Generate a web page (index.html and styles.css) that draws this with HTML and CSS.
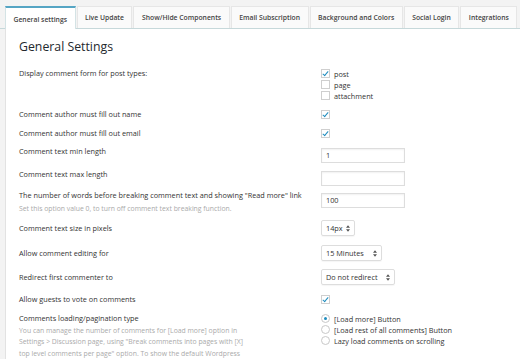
FILE: index.html
```html
<!DOCTYPE html>
<html lang="en">
<head>
    <meta charset="UTF-8">
    <title>General Settings</title>
    <link rel="stylesheet" href="styles.css">
</head>
<body>
    <ul class="tabs">
        <li class="tab active">General settings</li>
        <li class="tab">Live Update</li>
        <li class="tab">Show/Hide Components</li>
        <li class="tab">Email Subscription</li>
        <li class="tab">Background and Colors</li>
        <li class="tab">Social Login</li>
        <li class="tab">Integrations</li>
    </ul>

    <section class="panel">
        <h2 class="title">General Settings</h2>

        <div class="row row-types">
            <div class="label">Display comment form for post types:</div>
            <div class="field">
                <div class="opt"><span class="check on"></span>post</div>
                <div class="opt"><span class="check"></span>page</div>
                <div class="opt"><span class="check"></span>attachment</div>
            </div>
        </div>

        <div class="row row-name">
            <div class="label">Comment author must fill out name</div>
            <div class="field"><div class="opt"><span class="check on"></span></div></div>
        </div>

        <div class="row row-email">
            <div class="label">Comment author must fill out email</div>
            <div class="field"><div class="opt"><span class="check on"></span></div></div>
        </div>

        <div class="row row-min">
            <div class="label">Comment text min length</div>
            <div class="field"><div class="input">1</div></div>
        </div>

        <div class="row row-max">
            <div class="label">Comment text max length</div>
            <div class="field"><div class="input"></div></div>
        </div>

        <div class="row row-words">
            <div class="label">The number of words before breaking comment text and showing "Read more" link
                <p class="desc">Set this option value 0, to turn off comment text breaking function.</p>
            </div>
            <div class="field"><div class="input words">100</div></div>
        </div>

        <div class="row row-select row-size">
            <div class="label">Comment text size in pixels</div>
            <div class="field">
                <div class="select s-size">14px
                    <svg class="arrows" width="4" height="7" viewBox="0 0 4 7"><path d="M0 2.8L2 0.3L4 2.8Z M0 4.2L2 6.7L4 4.2Z" fill="#555"/></svg>
                </div>
            </div>
        </div>

        <div class="row row-select row-edit">
            <div class="label">Allow comment editing for</div>
            <div class="field">
                <div class="select s-edit">15 Minutes
                    <svg class="arrows" width="4" height="7" viewBox="0 0 4 7"><path d="M0 2.8L2 0.3L4 2.8Z M0 4.2L2 6.7L4 4.2Z" fill="#555"/></svg>
                </div>
            </div>
        </div>

        <div class="row row-select row-redirect">
            <div class="label">Redirect first commenter to</div>
            <div class="field">
                <div class="select s-redirect">Do not redirect
                    <svg class="arrows" width="4" height="7" viewBox="0 0 4 7"><path d="M0 2.8L2 0.3L4 2.8Z M0 4.2L2 6.7L4 4.2Z" fill="#555"/></svg>
                </div>
            </div>
        </div>

        <div class="row row-vote">
            <div class="label">Allow guests to vote on comments</div>
            <div class="field"><div class="opt"><span class="check on"></span></div></div>
        </div>

        <div class="row row-load">
            <div class="label">Comments loading/pagination type
                <p class="desc">You can manage the number of comments for [Load more] option in Settings &gt; Discussion page, using "Break comments into pages with [X] top level comments per page" option. To show the default Wordpress comment pagination you should enable the checkbox on bigining of the page.</p>
            </div>
            <div class="field">
                <div class="opt"><span class="radio on"></span>[Load more] Button</div>
                <div class="opt"><span class="radio"></span>[Load rest of all comments] Button</div>
                <div class="opt"><span class="radio"></span>Lazy load comments on scrolling</div>
            </div>
        </div>
    </section>
</body>
</html>
```

FILE: styles.css
```css
* {
    margin: 0;
    padding: 0;
    box-sizing: border-box;
}

body {
    font-family: 'Open Sans', sans-serif;
    background-color: #f3f3f3;
    color: #333;
    font-size: 7.3px;
    height: 359px;
    overflow: hidden;
}

.tabs {
    list-style: none;
    display: flex;
    gap: 1px;
    padding: 6px 0 0 5px;
    border-bottom: 1px solid #c6d8da;
}

.tab {
    height: 22px;
    padding: 0 7.5px;
    display: flex;
    align-items: center;
    background-color: #fafafa;
    border: 1px solid #e6e6e6;
    border-bottom: none;
    font-size: 6.8px;
    font-weight: 600;
    color: #444;
    white-space: nowrap;
}

.tab.active {
    background-color: #fff;
    border-top: 2px solid #55a5c4;
    border-left-color: #d4e3e5;
    border-right-color: #d4e3e5;
    margin-bottom: -1px;
    height: 23px;
    padding-top: 1px;
}

.panel {
    margin-left: 5px;
    background-color: #fff;
    border-left: 1px solid #e2e2e2;
    padding: 8px 0 0 13px;
    height: 400px;
}

.title {
    font-size: 12.3px;
    line-height: 20px;
    font-weight: 400;
    color: #23282d;
    margin-bottom: 11px;
}

.row {
    display: grid;
    grid-template-columns: 302px 1fr;
    align-items: start;
}

.label {
    line-height: 11px;
}

.desc {
    color: #aaa;
    font-size: 6.85px;
    margin-top: 2px;
}

.opt {
    display: flex;
    align-items: center;
    height: 11px;
}

.check {
    display: inline-block;
    width: 9px;
    height: 9px;
    border: 1px solid #cfcfcf;
    background-color: #fff;
    margin-right: 4px;
    position: relative;
}

.check.on::after {
    content: '';
    position: absolute;
    left: 2px;
    top: 0;
    width: 2px;
    height: 5px;
    border: solid #1e8cbe;
    border-width: 0 1.3px 1.3px 0;
    transform: rotate(40deg);
}

.radio {
    display: inline-block;
    width: 9px;
    height: 9px;
    border: 1px solid #c8c8c8;
    border-radius: 50%;
    background-color: #fff;
    margin-right: 4px;
    position: relative;
}

.radio.on::after {
    content: '';
    position: absolute;
    left: 2px;
    top: 2px;
    width: 3px;
    height: 3px;
    border-radius: 50%;
    background-color: #1e8cbe;
}

.input {
    width: 84px;
    height: 15px;
    margin-top: 2px;
    border: 1px solid #ddd;
    box-shadow: inset 0 1px 2px rgba(0, 0, 0, 0.06);
    padding: 0 4px;
    line-height: 13px;
}

.input.words {
    margin-top: 3px;
}

.row-select {
    align-items: center;
}

.select {
    height: 16px;
    border: 1px solid #ddd;
    border-radius: 2px;
    padding: 0 4px;
    display: flex;
    align-items: center;
    justify-content: space-between;
    box-shadow: 0 1px 1px rgba(0, 0, 0, 0.04);
}

.s-size { width: 34px; }
.s-edit { width: 61px; }
.s-redirect { width: 74px; }

.row-types { margin-bottom: 8px; }
.row-name { margin-bottom: 8px; }
.row-email { margin-bottom: 7px; }
.row-min { margin-bottom: 6px; }
.row-max { margin-bottom: 4px; }
.row-words { margin-bottom: 6px; }
.row-size { margin-bottom: 9px; }
.row-edit { margin-bottom: 8px; }
.row-redirect { margin-bottom: 9px; }
.row-vote { margin-bottom: 8px; }

.row-load .desc {
    width: 228px;
    line-height: 11.4px;
    margin-top: 1px;
}
```
